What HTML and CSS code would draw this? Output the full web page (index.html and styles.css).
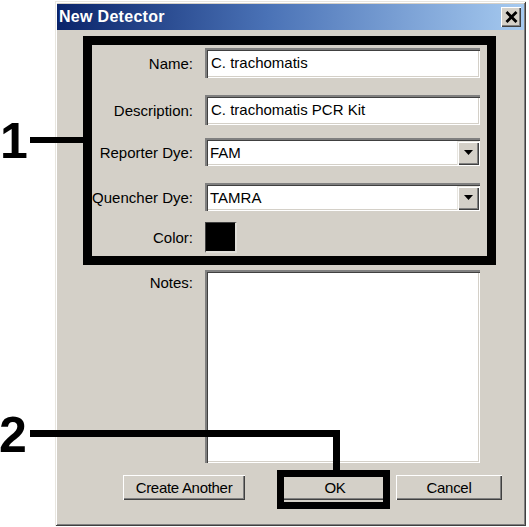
FILE: index.html
```html
<!DOCTYPE html>
<html>
<head>
<meta charset="utf-8">
<link rel="stylesheet" href="styles.css">
</head>
<body>
<div class="canvas">
  <div class="dialog">
    <div class="titlebar">
      <span class="title">New Detector</span>
      <span class="close">
        <svg width="13" height="12" viewBox="0 0 13 12"><path d="M1.5 1 L11.5 11 M11.5 1 L1.5 11" stroke="#000" stroke-width="2.8" fill="none"/></svg>
      </span>
    </div>
    <div class="form">
      <div class="row r-name">
        <label class="lbl">Name:</label>
        <div class="field text">C. trachomatis</div>
      </div>
      <div class="row r-desc">
        <label class="lbl">Description:</label>
        <div class="field text">C. trachomatis PCR Kit</div>
      </div>
      <div class="row r-rep">
        <label class="lbl">Reporter Dye:</label>
        <div class="field select"><span class="val">FAM</span><span class="arrow"><svg width="9" height="5" viewBox="0 0 9 5"><path d="M0 0 H9 L4.5 5 Z" fill="#000"/></svg></span></div>
      </div>
      <div class="row r-que">
        <label class="lbl">Quencher Dye:</label>
        <div class="field select"><span class="val">TAMRA</span><span class="arrow"><svg width="9" height="5" viewBox="0 0 9 5"><path d="M0 0 H9 L4.5 5 Z" fill="#000"/></svg></span></div>
      </div>
      <div class="row r-col">
        <label class="lbl">Color:</label>
        <div class="swatch"></div>
      </div>
      <div class="row r-notes">
        <label class="lbl top">Notes:</label>
        <div class="field notes"></div>
      </div>
      <div class="buttons">
        <div class="btn b-create">Create Another</div>
        <div class="btn b-ok">OK</div>
        <div class="btn b-cancel">Cancel</div>
      </div>
    </div>
  </div>

  <div class="num n1">1</div>
  <div class="num n2">2</div>
  <div class="box box1"></div>
  <div class="line l1"></div>
  <div class="line l2h"></div>
  <div class="line l2v"></div>
  <div class="box box2"></div>
</div>
</body>
</html>
```

FILE: styles.css
```css
html, body {
  margin: 0;
  padding: 0;
  background: #fff;
}
.canvas {
  position: relative;
  width: 529px;
  height: 527px;
  overflow: hidden;
  background: #fff;
  font-family: "Liberation Sans", Arial, sans-serif;
}
.dialog {
  margin-left: 55px;
  margin-top: 1px;
  width: 471px;
  height: 525px;
  box-sizing: border-box;
  padding: 3px 2px 2px 2px;
  background: #d4d0c8;
  box-shadow: inset 1px 1px 0 #e8e6e0, inset -1px -1px 0 #404040, inset 2px 2px 0 #ffffff, inset -2px -2px 0 #808080;
}
.titlebar {
  height: 26px;
  display: flex;
  align-items: center;
  justify-content: space-between;
  padding: 0 3px 0 2px;
  background: linear-gradient(to right, #0a246a 0%, #4a72b6 45%, #a6caf0 100%);
}
.title {
  color: #fff;
  font-weight: bold;
  font-size: 16px;
  letter-spacing: 0.3px;
}
.close {
  width: 20px;
  height: 20px;
  box-sizing: border-box;
  background: #d4d0c8;
  display: flex;
  align-items: center;
  justify-content: center;
  box-shadow: inset 1px 1px 0 #fff, inset -1px -1px 0 #404040, inset -2px -2px 0 #808080;
}
.form {
  padding-top: 18px;
  font-size: 15px;
  color: #000;
}
.row {
  display: grid;
  grid-template-columns: 136px 275px;
  column-gap: 12px;
  align-items: center;
}
.lbl {
  text-align: right;
  white-space: nowrap;
}
.lbl.top {
  align-self: start;
  padding-top: 4px;
}
.field {
  box-sizing: border-box;
  background: #fff;
  box-shadow: inset 1px 1px 0 #808080, inset 2px 2px 0 #404040, inset -1px -1px 0 #fff, inset -2px -2px 0 #d4d0c8;
  border-top: 1px solid #808080;
  border-left: 1px solid #808080;
}
.text {
  height: 30px;
  line-height: 28px;
  padding-left: 5px;
  white-space: nowrap;
}
.select {
  height: 28px;
  display: flex;
  align-items: center;
  justify-content: space-between;
  padding: 0 1px 0 4px;
}
.arrow {
  width: 22px;
  height: 24px;
  box-sizing: border-box;
  background: #d4d0c8;
  display: flex;
  align-items: center;
  justify-content: center;
  box-shadow: inset 1px 1px 0 #e8e6e0, inset 2px 2px 0 #fff, inset -1px -1px 0 #404040, inset -2px -2px 0 #808080;
}
.swatch {
  width: 32px;
  height: 31px;
  box-sizing: border-box;
  background: #000;
  border-top: 1px solid #404040;
  border-left: 1px solid #404040;
  border-right: 2px solid #e0ded8;
  border-bottom: 2px solid #e0ded8;
}
.notes {
  height: 193px;
}
.r-desc { margin-top: 17px; }
.r-rep { margin-top: 13px; }
.r-que { margin-top: 17px; }
.r-col { margin-top: 11px; }
.r-notes { margin-top: 17px; align-items: start; }
.buttons {
  display: flex;
  margin-top: 12px;
  padding-left: 66px;
}
.btn {
  height: 25px;
  box-sizing: border-box;
  display: flex;
  align-items: center;
  justify-content: center;
  font-size: 15px;
  letter-spacing: -0.3px;
  background: #d4d0c8;
  box-shadow: inset 1px 1px 0 #fff, inset -1px -1px 0 #404040, inset -2px -2px 0 #808080;
}
.b-create { width: 122px; }
.b-ok { width: 104px; margin-left: 38px; }
.b-cancel { width: 106px; margin-left: 9px; }

/* annotations */
.num {
  position: absolute;
  font-family: "Liberation Sans", Arial, sans-serif;
  font-weight: bold;
  font-size: 50px;
  line-height: 50px;
  color: #000;
}
.n1 { left: 0; top: 116px; }
.n2 { left: -1px; top: 410px; }
.box {
  position: absolute;
  box-sizing: border-box;
  border: 9px solid #000;
}
.box1 { left: 83px; top: 36px; width: 413px; height: 229px; }
.box2 { left: 277px; top: 470px; width: 113px; height: 39px; border-width: 7px; }
.line {
  position: absolute;
  background: #000;
}
.l1 { left: 30px; top: 137px; width: 54px; height: 6px; }
.l2h { left: 30px; top: 430px; width: 310px; height: 7px; }
.l2v { left: 333px; top: 430px; width: 7px; height: 41px; }
```
